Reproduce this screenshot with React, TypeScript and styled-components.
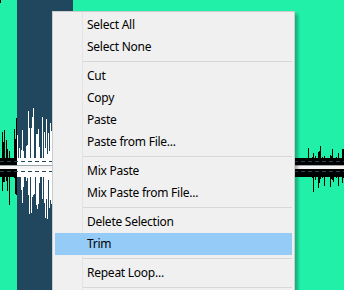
import React from 'react';
import styled, { createGlobalStyle } from 'styled-components';

const GlobalStyle = createGlobalStyle`
  html, body { margin: 0; padding: 0; }
  body {
    width: 344px;
    height: 290px;
    overflow: hidden;
    font-family: "Noto Sans", "Open Sans", sans-serif;
  }
`;

const Stage = styled.div`
  position: relative;
  width: 344px;
  height: 290px;
  overflow: hidden;
  background: #21f0a9;
`;

const Wave = styled.svg`
  display: block;
`;

const Menu = styled.ul`
  position: absolute;
  left: 52px;
  top: 11px;
  box-sizing: border-box;
  width: 243px;
  margin: 0;
  padding: 2px 2px 6px;
  list-style: none;
  background-color: #f0f0f0;
  background-image: linear-gradient(
    to right,
    transparent 29px,
    #e4e4e4 29px,
    #e4e4e4 30px,
    transparent 30px
  );
  border: 1px solid #cccccc;
  box-shadow: 3px 3px 3px rgba(0, 0, 0, 0.28);
`;

const Item = styled.li<{ $active?: boolean }>`
  height: 22px;
  line-height: 22px;
  padding-left: 32px;
  font-size: 12px;
  letter-spacing: -0.25px;
  color: #000;
  white-space: nowrap;
  background: ${(p) => (p.$active ? '#95cbf7' : 'transparent')};
`;

const Separator = styled.li`
  height: 7px;
  display: flex;
  align-items: center;
  padding-left: 28px;
  &::after {
    content: '';
    flex: 1;
    height: 1px;
    background: #d7d7d7;
  }
`;

function rng(seed: number) {
  let a = seed;
  return () => {
    a |= 0;
    a = (a + 0x6d2b79f5) | 0;
    let t = Math.imul(a ^ (a >>> 15), 1 | a);
    t = (t + Math.imul(t ^ (t >>> 7), 61 | t)) ^ t;
    return ((t ^ (t >>> 14)) >>> 0) / 4294967296;
  };
}

const SEL_X0 = 17;
const SEL_X1 = 73;
const TOP_BAND = 158;
const BOT_BAND = 177;

type Spike = { x: number; up: number; down: number };

function buildSpikes(): Spike[] {
  const r = rng(7);
  const out: Spike[] = [];
  for (let x = 0; x < 54; x++) {
    if (r() < 0.35) continue;
    const env = x < 17 ? 42 : x < 25 ? 30 : 52;
    const up = Math.round(Math.pow(r(), 1.3) * env);
    const down = Math.round(Math.pow(r(), 1.4) * (x < 17 ? 34 : 42));
    out.push({ x, up, down });
  }
  for (let x = 295; x < 344; x++) {
    if (r() < 0.62) continue;
    const up = Math.round(Math.pow(r(), 2) * 10);
    const down = Math.round(Math.pow(r(), 2) * 10);
    out.push({ x, up, down });
  }
  out.push({ x: 320, up: 12, down: 2 });
  out.push({ x: 313, up: 3, down: 15 });
  out.push({ x: 318, up: 6, down: 11 });
  return out;
}

const spikes = buildSpikes();

function spikePath(inSel: boolean) {
  return spikes
    .filter((s) => (s.x >= SEL_X0 && s.x < SEL_X1) === inSel)
    .map(
      (s) =>
        `M${s.x + 0.5} ${TOP_BAND - s.up}V${TOP_BAND}M${s.x + 0.5} ${BOT_BAND}V${BOT_BAND + s.down}`
    )
    .join('');
}

function Waveform() {
  return (
    <Wave width={344} height={290} viewBox="0 0 344 290">
      <rect x={SEL_X0} y={0} width={SEL_X1 - SEL_X0} height={290} fill="#21475e" />
      <path d="M0.5 0V3" stroke="#000" />
      <path d={spikePath(false)} stroke="#000" strokeWidth={1} />
      <path d={spikePath(true)} stroke="#fff" strokeWidth={1} />
      <rect x={0} y={158} width={SEL_X0} height={7} fill="#000" />
      <rect x={SEL_X0} y={158} width={SEL_X1 - SEL_X0} height={7} fill="#fff" />
      <rect x={SEL_X1} y={158} width={344 - SEL_X1} height={7} fill="#000" />
      <rect x={0} y={165} width={344} height={1} fill="#9aa6ad" />
      <rect x={0} y={166} width={344} height={3} fill="#f4f4f4" />
      <rect x={0} y={169} width={SEL_X0} height={8} fill="#000" />
      <rect x={SEL_X0} y={169} width={SEL_X1 - SEL_X0} height={8} fill="#fff" />
      <rect x={SEL_X1} y={169} width={344 - SEL_X1} height={8} fill="#000" />
      <line x1={0} y1={161.5} x2={344} y2={161.5} stroke="#21475e" strokeDasharray="4 3" />
      <line x1={0} y1={171.5} x2={344} y2={171.5} stroke="#21475e" strokeDasharray="4 3" />
    </Wave>
  );
}

type Entry = { label: string; active?: boolean } | 'sep';

const entries: Entry[] = [
  { label: 'Select All' },
  { label: 'Select None' },
  'sep',
  { label: 'Cut' },
  { label: 'Copy' },
  { label: 'Paste' },
  { label: 'Paste from File...' },
  'sep',
  { label: 'Mix Paste' },
  { label: 'Mix Paste from File...' },
  'sep',
  { label: 'Delete Selection' },
  { label: 'Trim', active: true },
  'sep',
  { label: 'Repeat Loop...' },
  'sep',
];

export default function App() {
  return (
    <>
      <GlobalStyle />
      <Stage>
        <Waveform />
        <Menu>
          {entries.map((e, i) =>
            e === 'sep' ? (
              <Separator key={i} />
            ) : (
              <Item key={i} $active={e.active}>
                {e.label}
              </Item>
            )
          )}
        </Menu>
      </Stage>
    </>
  );
}
